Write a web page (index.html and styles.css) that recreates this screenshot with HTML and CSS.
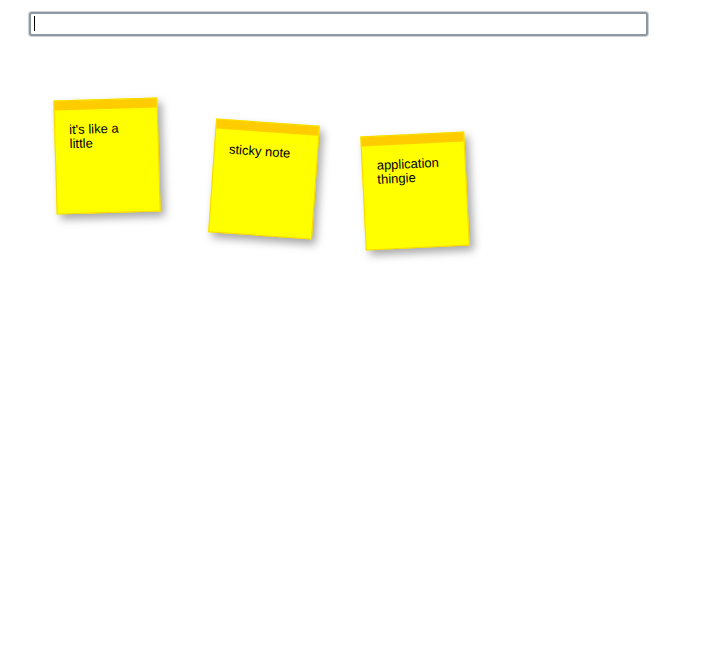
FILE: index.html
```html
<!DOCTYPE html>
<html>
<head>
<meta charset="utf-8">
<link rel="stylesheet" href="styles.css">
</head>
<body>
<div class="page">
  <div class="bar">
    <div class="entry-wrap">
      <input class="entry" type="text" autofocus>
      <span class="caret"></span>
    </div>
  </div>
  <div class="board">
    <div class="note note-1">
      <div class="note-top"></div>
      <div class="note-text">it's like a little</div>
    </div>
    <div class="note note-2">
      <div class="note-top"></div>
      <div class="note-text">sticky note</div>
    </div>
    <div class="note note-3">
      <div class="note-top"></div>
      <div class="note-text">application thingie</div>
    </div>
  </div>
</div>
</body>
</html>
```

FILE: styles.css
```css
html, body {
  margin: 0;
  padding: 0;
  background: #ffffff;
}

.page {
  width: 704px;
  height: 670px;
  font-family: "Liberation Sans", Arial, sans-serif;
}

.bar {
  padding: 12px 0 0 29px;
}

.entry-wrap {
  position: relative;
  width: 619px;
  height: 24px;
}

.entry {
  box-sizing: border-box;
  display: block;
  width: 619px;
  height: 24px;
  margin: 0;
  padding: 0 4px;
  border: 2px solid #8f989f;
  border-radius: 3px;
  box-shadow: 0 0 0 1px #c9d0d6;
  background: #fff;
  font-family: "Liberation Sans", Arial, sans-serif;
  font-size: 13px;
  outline: none;
  caret-color: transparent;
}

.caret {
  position: absolute;
  left: 5px;
  top: 4px;
  width: 1px;
  height: 15px;
  background: #000;
}

.board {
  display: flex;
  align-items: flex-start;
  padding-left: 55px;
}

.note {
  box-sizing: border-box;
  flex: none;
  width: 104px;
  height: 114px;
  background: #ffff00;
  border: 1px solid #f7d800;
  box-shadow: 4px 5px 8px rgba(0, 0, 0, 0.35);
}

.note-top {
  height: 9px;
  background: #ffcc00;
}

.note-text {
  padding: 13px 14px 0 14px;
  font-size: 13px;
  line-height: 14px;
  color: #000;
}

.note-1 {
  margin-top: 63px;
  transform: rotate(-1.7deg);
}

.note-2 {
  margin-top: 86px;
  margin-left: 53px;
  transform: rotate(4deg);
}

.note-3 {
  margin-top: 98px;
  margin-left: 47px;
  transform: rotate(-2.8deg);
}
```
